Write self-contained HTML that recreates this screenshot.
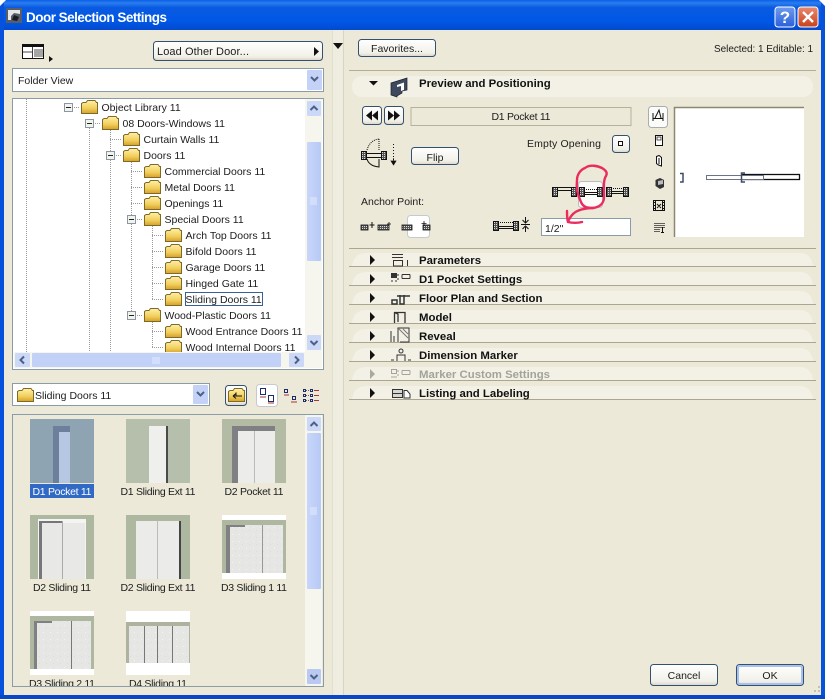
<!DOCTYPE html>
<html><head><meta charset="utf-8"><title>Door Selection Settings</title>
<style>
html,body{margin:0;padding:0;background:#ece9d8;width:825px;height:699px;overflow:hidden}
svg{display:block}
text{font-family:"Liberation Sans",sans-serif;font-size:10.5px;fill:#1c1c1c}
.b{font-weight:bold;font-size:11.4px;fill:#111}
.m{text-anchor:middle}
</style></head><body>
<svg xmlns="http://www.w3.org/2000/svg" width="825" height="699" viewBox="0 0 825 699">
<defs>
<linearGradient id="tb" x1="0" y1="0" x2="0" y2="1"><stop offset="0" stop-color="#0a5fe6"/><stop offset=".1" stop-color="#2a7ef0"/><stop offset=".25" stop-color="#0a5ae0"/><stop offset=".7" stop-color="#0058e6"/><stop offset="1" stop-color="#0349cf"/></linearGradient>
<linearGradient id="fd" x1="0" y1="0" x2="0" y2="1"><stop offset="0" stop-color="#fff0a8"/><stop offset=".6" stop-color="#f2cf5c"/><stop offset="1" stop-color="#d3a027"/></linearGradient>
<linearGradient id="bt" x1="0" y1="0" x2="0" y2="1"><stop offset="0" stop-color="#fff"/><stop offset=".8" stop-color="#f1f0e8"/><stop offset="1" stop-color="#d8d5c8"/></linearGradient>
<linearGradient id="sb" x1="0" y1="0" x2="1" y2="0"><stop offset="0" stop-color="#c8d6fa"/><stop offset="1" stop-color="#b7c9f5"/></linearGradient>
<linearGradient id="red" x1="0" y1="0" x2="0" y2="1"><stop offset="0" stop-color="#e98a70"/><stop offset="1" stop-color="#c8401c"/></linearGradient>
<linearGradient id="blu" x1="0" y1="0" x2="0" y2="1"><stop offset="0" stop-color="#6f9bf0"/><stop offset="1" stop-color="#2a5fd8"/></linearGradient>
<symbol id="f" viewBox="0 0 17 14" width="17" height="14"><path d="M.5 13.5V3.5L2 2.5H5L6.5.5H14L15.5 2.5H16.5V13.5Z" fill="url(#fd)" stroke="#7d6a28"/></symbol>
<symbol id="x" viewBox="0 0 9 9" width="9" height="9"><rect x=".5" y=".5" width="8" height="8" fill="#f3f3ee" stroke="#8a97a3"/><path d="M2 4.5H7" stroke="#222"/></symbol>
<clipPath id="ct"><rect x="14" y="99" width="291" height="253"/></clipPath>
<clipPath id="cg"><rect x="14" y="415" width="291" height="271"/></clipPath>
<pattern id="ht" width="2" height="2" patternUnits="userSpaceOnUse"><rect width="2" height="2" fill="#555"/><rect width="1" height="1" fill="#ddd"/></pattern>
<pattern id="sp" width="7" height="7" patternUnits="userSpaceOnUse"><rect width="7" height="7" fill="#e6e6e4"/><rect x="1" y="2" width="1" height="1" fill="#f3f3f3"/><rect x="4" y="5" width="1" height="1" fill="#dcdcdc"/></pattern>
</defs>

<rect width="825" height="699" fill="#ece9d8"/>
<!-- window frame -->
<rect x="0" y="0" width="825" height="30" fill="url(#tb)"/>
<rect x="0" y="0" width="4" height="699" fill="#0752dc"/>
<rect x="821" y="0" width="4" height="699" fill="#0752dc"/>
<rect x="0" y="695" width="825" height="4" fill="#0747c8"/>
<path d="M0 0H6L0 6ZM825 0H819L825 6Z" fill="#fff"/>
<!-- title -->
<rect x="6" y="8" width="16" height="15" fill="#555e6a"/><path d="M8 10H20V14L14 13L11 16V20H8Z" fill="#e6e6e6"/><path d="M14 15L19 17L17 21L12 20Z" fill="#1a1a22"/>
<text x="26" y="22" style="font-size:13.5px;font-weight:bold;fill:#fff" textLength="141">Door Selection Settings</text>
<rect x="775" y="7" width="20" height="20" rx="3" fill="url(#blu)" stroke="#fff"/>
<text x="785" y="23" class="m" style="font-size:17px;font-weight:bold;fill:#fff">?</text>
<rect x="798" y="7" width="20" height="20" rx="3" fill="url(#red)" stroke="#fff"/>
<path d="M803 12L813 22M813 12L803 22" stroke="#fff" stroke-width="2.4"/>

<!-- splitter -->
<rect x="332" y="30" width="12" height="665" fill="#efede0"/>
<path d="M332.5 30V695" stroke="#e2dfcf"/><path d="M343.5 30V695" stroke="#d8d5c4"/>
<path d="M333 43H343L338 49Z" fill="#111"/>

<!-- top-left -->
<rect x="22.5" y="44.5" width="21" height="14" fill="#fff" stroke="#111"/><rect x="22" y="44" width="22" height="3" fill="#111"/><path d="M32.5 47V58M22 52H32M34 50H43M34 52H43M34 54H43M34 56H43" stroke="#111" stroke-width=".8"/>
<path d="M49 56L53 59L49 62Z" fill="#111"/>
<rect x="153.5" y="41.5" width="169" height="19" rx="3" fill="url(#bt)" stroke="#34506f"/>
<text x="157" y="55" textLength="92" style="font-size:11px">Load Other Door...</text>
<path d="M314 47L319 51.5L314 56Z" fill="#111"/>

<rect x="12.5" y="68.5" width="311" height="23" fill="#fff" stroke="#8a9ca8"/>
<text x="18" y="84">Folder View</text>
<rect x="307" y="70" width="15" height="20" rx="1" fill="#c3d2f6"/><path d="M311 77L314.500 80.500L318 77" fill="none" stroke="#4d6185" stroke-width="2"/>

<!-- tree -->
<rect x="12.500" y="98.500" width="311" height="271" fill="#fff" stroke="#8a9ca8"/>
<g clip-path="url(#ct)">
<g stroke="#999" stroke-dasharray="1 1" fill="none">
<path d="M26.500 99V352M89.500 128V352M110.500 128V352M131.500 160V315M152.500 224V299.500M152.500 320V348"/>
<path d="M72 107.500H80M93 123.500H101M110 139.500H122M114 155.500H122M131 171.500H143M131 187.500H143M131 203.500H143M135 219.500H143M152 235.500H164M152 251.500H164M152 267.500H164M152 283.500H164M152 299.500H164M135 315.500H143M152 331.500H164M152 347.500H164"/>
</g>
<use href="#x" x="64" y="103"/><use href="#x" x="85" y="119"/><use href="#x" x="106" y="151"/><use href="#x" x="127" y="215"/><use href="#x" x="127" y="311"/>
<use href="#f" x="81" y="100"/><use href="#f" x="102" y="116"/><use href="#f" x="123" y="132"/><use href="#f" x="123" y="148"/><use href="#f" x="144" y="164"/><use href="#f" x="144" y="180"/><use href="#f" x="144" y="196"/><use href="#f" x="144" y="212"/><use href="#f" x="165" y="228"/><use href="#f" x="165" y="244"/><use href="#f" x="165" y="260"/><use href="#f" x="165" y="276"/><use href="#f" x="165" y="292"/><use href="#f" x="144" y="308"/><use href="#f" x="165" y="324"/><use href="#f" x="165" y="340"/>
<text x="101.500" y="111">Object Library 11</text>
<text x="122.500" y="127">08 Doors-Windows 11</text>
<text x="143.500" y="143">Curtain Walls 11</text>
<text x="143.500" y="159">Doors 11</text>
<text x="164.500" y="175">Commercial Doors 11</text>
<text x="164.500" y="191">Metal Doors 11</text>
<text x="164.500" y="207">Openings 11</text>
<text x="164.500" y="223">Special Doors 11</text>
<text x="185.500" y="239">Arch Top Doors 11</text>
<text x="185.500" y="255">Bifold Doors 11</text>
<text x="185.500" y="271">Garage Doors 11</text>
<text x="185.500" y="287">Hinged Gate 11</text>
<rect x="185.500" y="292.500" width="77" height="13" fill="#fff" stroke="#3a5f95"/>
<text x="185.500" y="303">Sliding Doors 11</text>
<text x="164.500" y="319">Wood-Plastic Doors 11</text>
<text x="185.500" y="335">Wood Entrance Doors 11</text>
<text x="185.500" y="351">Wood Internal Doors 11</text>
</g>
<!-- tree v-scroll -->
<rect x="305" y="99" width="17" height="253" fill="#f6f6ee"/>
<rect x="307" y="101" width="14" height="15" rx="1" fill="#cbd8f8"/><path d="M310.500 110L314 106.500L317.500 110" fill="none" stroke="#4d6185" stroke-width="2"/>
<rect x="307" y="142" width="14" height="119" rx="1" fill="url(#sb)"/><path d="M310 198H317M310 200H317M310 202H317M310 204H317" stroke="#e4ebfc"/>
<rect x="307" y="335" width="14" height="15" rx="1" fill="#cbd8f8"/><path d="M310.500 341L314 344.500L317.500 341" fill="none" stroke="#4d6185" stroke-width="2"/>
<!-- tree h-scroll -->
<rect x="14" y="352" width="308" height="16" fill="#f6f6ee"/>
<rect x="15" y="353" width="15" height="14" rx="1" fill="#cbd8f8"/><path d="M24 356.500L20.500 360L24 363.500" fill="none" stroke="#4d6185" stroke-width="2"/>
<rect x="32" y="353" width="249" height="14" rx="1" fill="#c1d1f8"/><path d="M153 357V364M155 357V364M157 357V364M159 357V364" stroke="#e4ebfc"/>
<rect x="289" y="353" width="15" height="14" rx="1" fill="#cbd8f8"/><path d="M295 356.500L298.500 360L295 363.500" fill="none" stroke="#4d6185" stroke-width="2"/>

<!-- folder combo -->
<rect x="12.500" y="383.500" width="197" height="22" fill="#fff" stroke="#8a9ca8"/>
<use href="#f" x="17" y="388"/><text x="35" y="399">Sliding Doors 11</text>
<rect x="193" y="385" width="15" height="19" rx="1" fill="#c3d2f6"/><path d="M197 392L200.500 395.500L204 392" fill="none" stroke="#4d6185" stroke-width="2"/>
<rect x="225.500" y="385.500" width="21" height="20" rx="3" fill="url(#bt)" stroke="#34506f"/>
<use href="#f" x="228" y="388"/><path d="M233 396H242M233 396L236 393.500M233 396L236 398.500M236 392.500V396" fill="none" stroke="#111"/>
<rect x="256.500" y="384.500" width="21" height="22" rx="3" fill="#fff" stroke="#c5c9d2"/>
<g fill="none" stroke="#1e2a6e"><rect x="260.500" y="388.500" width="5" height="6"/><rect x="268.500" y="395.500" width="5" height="6"/></g><path d="M260 397H266M268 403H274" stroke="#a33" />
<g fill="none" stroke="#1e2a6e"><rect x="284.500" y="389.500" width="3" height="3"/><rect x="292.500" y="396.500" width="3" height="3"/></g><path d="M284 395H289M291 402H297" stroke="#a33"/>
<g fill="none" stroke="#1e2a6e"><rect x="303.500" y="389.500" width="2" height="2"/><rect x="303.500" y="394.500" width="2" height="2"/><rect x="303.500" y="399.500" width="2" height="2"/><rect x="310.500" y="389.500" width="2" height="2"/><rect x="310.500" y="394.500" width="2" height="2"/><rect x="310.500" y="399.500" width="2" height="2"/></g><path d="M314 390.500H319M314 395.500H319M314 400.500H319" stroke="#a33"/><path d="M306 390.500H310M306 395.500H310M306 400.500H310" stroke="#667" stroke-dasharray="1 1"/>

<!-- grid -->
<rect x="12.500" y="414.500" width="311" height="272" fill="#ece9d8" stroke="#8a9ca8"/>
<g clip-path="url(#cg)">
<!-- T1 -->
<rect x="30" y="419" width="64" height="64" fill="#8fa4b2"/><rect x="53" y="426" width="17" height="57" fill="#6d809b"/><rect x="59" y="432" width="11" height="51" fill="#b5c7e2"/>
<!-- T2 -->
<rect x="126" y="419" width="64" height="64" fill="#b5bfab"/><rect x="149" y="426" width="17" height="57" fill="#efefed"/><rect x="166" y="426" width="2" height="57" fill="#4a4a48"/>
<!-- T3 -->
<rect x="222" y="419" width="64" height="64" fill="#b4bba5"/><rect x="232" y="426" width="43" height="57" fill="#808084"/><rect x="238" y="431" width="37" height="52" fill="#ececea"/><rect x="254" y="431" width="1" height="52" fill="#bbb"/>
<!-- T4 -->
<rect x="30" y="515" width="64" height="64" fill="#aeb8a0"/><rect x="38" y="519" width="48" height="60" fill="#f4f4f2"/><rect x="39" y="521" width="3" height="58" fill="#77777a"/><rect x="42" y="521" width="20" height="2" fill="#77777a"/><rect x="42" y="523" width="20" height="56" fill="#e8e8e6"/><rect x="62" y="521" width="1" height="58" fill="#aaa"/><rect x="63" y="523" width="22" height="56" fill="#e8e8e6"/>
<!-- T5 -->
<rect x="126" y="515" width="64" height="64" fill="#aeb8a0"/><rect x="136" y="521" width="43" height="58" fill="#ebebe9"/><rect x="157" y="521" width="1" height="58" fill="#bbb"/><rect x="179" y="521" width="2" height="58" fill="#444"/>
<!-- T6 -->
<rect x="222" y="515" width="64" height="64" fill="#fff"/><rect x="222" y="520" width="64" height="53" fill="#aeb8a0"/><rect x="226" y="525" width="57" height="48" fill="url(#sp)"/><rect x="226" y="525" width="4" height="48" fill="#808084"/><rect x="230" y="525" width="15" height="2" fill="#808084"/><rect x="262" y="525" width="1" height="48" fill="#999"/>
<!-- T7 -->
<rect x="30" y="611" width="64" height="64" fill="#fff"/><rect x="30" y="616" width="64" height="53" fill="#aeb8a0"/><rect x="34" y="621" width="57" height="48" fill="url(#sp)"/><rect x="34" y="621" width="3" height="48" fill="#808084"/><rect x="37" y="621" width="15" height="2" fill="#808084"/><rect x="71" y="621" width="1" height="48" fill="#777"/>
<!-- T8 -->
<rect x="126" y="611" width="64" height="64" fill="#fff"/><rect x="126" y="622" width="64" height="41" fill="#aeb3a0"/><rect x="129" y="626" width="60" height="37" fill="url(#sp)"/><path d="M144.500 626V663M157.500 626V663M172.500 626V663" stroke="#777"/>
<rect x="30" y="484" width="64" height="14" fill="#316ac5"/>
<text x="62" y="495" class="m" style="fill:#fff" textLength="59">D1 Pocket 11</text>
<text x="158" y="495" class="m" textLength="75">D1 Sliding Ext 11</text>
<text x="254" y="495" class="m" textLength="59">D2 Pocket 11</text>
<text x="62" y="591" class="m" textLength="58">D2 Sliding 11</text>
<text x="158" y="591" class="m" textLength="75">D2 Sliding Ext 11</text>
<text x="254" y="591" class="m" textLength="66">D3 Sliding 1 11</text>
<text x="62" y="687" class="m" textLength="66">D3 Sliding 2 11</text>
<text x="158" y="687" class="m" textLength="58">D4 Sliding 11</text>
</g>
<!-- grid scroll -->
<rect x="305" y="415" width="17" height="271" fill="#f6f6ee"/>
<rect x="307" y="417" width="14" height="14" rx="1" fill="#cbd8f8"/><path d="M310.500 426L314 422.500L317.500 426" fill="none" stroke="#4d6185" stroke-width="2"/>
<rect x="307" y="433" width="14" height="156" rx="1" fill="url(#sb)"/><path d="M310 508H317M310 510H317M310 512H317M310 514H317" stroke="#e4ebfc"/>
<rect x="307" y="669" width="14" height="15" rx="1" fill="#b9c9f2"/><path d="M310.500 675L314 678.500L317.500 675" fill="none" stroke="#4d6185" stroke-width="2"/>

<!-- right top -->
<rect x="358.500" y="39.500" width="77" height="17" rx="3" fill="url(#bt)" stroke="#34506f"/>
<text x="397" y="52" class="m">Favorites...</text>
<text x="714" y="52" style="font-size:10px" textLength="99">Selected: 1 Editable: 1</text>
<path d="M349 70.500H816" stroke="#b3ae98"/>
<rect x="352" y="76" width="461" height="21" rx="10" fill="#f3f1e6"/>
<path d="M369 81H378L373.500 85.500Z" fill="#111"/>
<path d="M391 83L407 78V90L402 91V93L397 96V97L391 95Z" fill="#3d4a5e" stroke="#1a2230" stroke-width=".7"/>
<path d="M397 85L404 82.500V90L401 91V86L397 87Z" fill="#fff"/>
<text x="419" y="87" class="b">Preview and Positioning</text>

<!-- nav -->
<rect x="362.500" y="106.500" width="19" height="18" rx="3" fill="url(#bt)" stroke="#34506f"/>
<path d="M372 110.500L366 115.500L372 120.500ZM378 110.500L372 115.500L378 120.500Z" fill="#111"/>
<rect x="384.500" y="106.500" width="19" height="18" rx="3" fill="url(#bt)" stroke="#34506f"/>
<path d="M388 110.500L394 115.500L388 120.500ZM394 110.500L400 115.500L394 120.500Z" fill="#111"/>
<rect x="411" y="107.500" width="220" height="18" fill="#ece9d8" stroke="#b5b19c"/>
<text x="521" y="120" class="m" textLength="59">D1 Pocket 11</text>

<!-- door swing icon -->
<g fill="none" stroke="#111"><rect x="361.500" y="151.500" width="5" height="8" fill="url(#ht)"/><rect x="381.500" y="151.500" width="5" height="8" fill="url(#ht)"/><path d="M366 153.500H381M366 157.500H381"/><path d="M367 150Q370 140 379 139" stroke-dasharray="1 1"/><path d="M379 139V151" stroke-dasharray="1 1"/><path d="M367 159Q369 166 379 167V159"/><path d="M393.500 144V160" stroke-dasharray="1 2"/></g>
<path d="M393.500 158V164M391 161L393.500 165L396 161Z" fill="#111" stroke="#111" stroke-width=".7"/>
<rect x="411.500" y="147.500" width="47" height="17" rx="3" fill="url(#bt)" stroke="#34506f"/>
<text x="435" y="161" class="m">Flip</text>
<text x="527" y="147" textLength="74">Empty Opening</text>
<rect x="612.500" y="135.500" width="17" height="17" rx="3" fill="url(#bt)" stroke="#34506f"/>
<rect x="618.500" y="141.500" width="4" height="4" fill="#fff" stroke="#111"/>

<!-- anchor -->
<text x="361" y="205">Anchor Point:</text>
<rect x="407.500" y="215.500" width="22" height="22" rx="3" fill="#fff" stroke="#c5c9d2"/>
<rect x="361" y="225" width="7" height="5" fill="url(#ht)" stroke="#111" stroke-width=".8"/>
<path d="M372 222V228M369.500 225H374.500" stroke="#111"/>
<rect x="378" y="225" width="11" height="5" fill="url(#ht)" stroke="#111" stroke-width=".8"/>
<path d="M389 222V226M387 224H391" stroke="#111" stroke-width=".8"/>
<rect x="402" y="225" width="10" height="5" fill="url(#ht)" stroke="#111" stroke-width=".8"/>
<rect x="423" y="225" width="7" height="5" fill="url(#ht)" stroke="#111" stroke-width=".8"/>
<path d="M424 221V226M421.500 223.500H426.500" stroke="#111" stroke-width=".8"/>

<!-- position icons -->
<rect x="578.500" y="181.500" width="24" height="26" rx="3" fill="#fbfbf8" stroke="#b9bcc2"/>
<g stroke="#111" fill="none">
<rect x="552.500" y="187.500" width="5" height="9" fill="url(#ht)"/><rect x="571.500" y="187.500" width="5" height="9" fill="url(#ht)"/><path d="M557 187.500H572.500M557 190.500H572"/>
<rect x="579.500" y="187.500" width="5" height="9" fill="url(#ht)"/><rect x="597.500" y="187.500" width="5" height="9" fill="url(#ht)"/><path d="M584 189.500H598" stroke-dasharray="1 1"/><path d="M584 192.500H598M584 194.500H598"/>
<rect x="606.500" y="187.500" width="5" height="9" fill="url(#ht)"/><rect x="623.500" y="187.500" width="5" height="9" fill="url(#ht)"/><path d="M611 188.500H624" stroke-dasharray="1 1"/><path d="M611 193.500H624M611 191.500H624"/>
<rect x="493.500" y="221.500" width="5" height="9" fill="url(#ht)"/><rect x="513.500" y="221.500" width="5" height="9" fill="url(#ht)"/><path d="M498 222.500H513" stroke-dasharray="1 1"/><path d="M498 226.500H513M498 228.500H513"/>
<path d="M525.500 217V223M525.500 227V232M522.500 220L525.500 223L528.500 220M522.500 229L525.500 226L528.500 229M521 224.500H530"/>
</g>
<rect x="541.500" y="218.500" width="89" height="17" fill="#fff" stroke="#8a9ca8"/>
<text x="545" y="232">1/2"</text>

<!-- preview -->
<rect x="648.500" y="106.500" width="19" height="21" rx="3" fill="#fbfbf8" stroke="#a8acb4"/>
<g fill="none" stroke="#111"><path d="M653 113V121M663 113V121M653 118.500H663M655 118L659 110L661 118"/></g>
<rect x="655.500" y="135.500" width="7" height="10" fill="#fff" stroke="#111"/><rect x="657" y="137" width="4" height="3" fill="none" stroke="#111" stroke-width=".7"/>
<path d="M656.500 156.500L659 155.500L661.500 157.500V166L658.500 165L656.500 163.500Z" fill="#fff" stroke="#111"/><path d="M659 158V164" stroke="#111"/>
<path d="M655.500 180L660 178L664 180V187L660 189L655.500 186Z" fill="#333"/><path d="M658 181L663 180V184L658 185Z" fill="#bbb"/>
<g stroke="#111" fill="none"><rect x="653.500" y="200.500" width="11" height="10"/><path d="M655.500 200V211M662.500 200V211M653 202.500H656M653 205.500H656M653 208.500H656M662 202.500H665M662 205.500H665M662 208.500H665M657 204L661 208M661 204L657 208"/></g>
<path d="M654 223.500H665M654 225.500H665M654 227.500H665M654 229.500H660M654 231.500H660" stroke="#333" stroke-width=".8"/><path d="M662.500 227V232M661 232.500H664" stroke="#111"/>
<rect x="674" y="107" width="130" height="130" fill="#fff"/>
<path d="M674.500 237V107.500H804" fill="none" stroke="#8b8770" stroke-width="1.500"/>
<path d="M680 173.500H683V182H680" fill="none" stroke="#3e4c68" stroke-width="1.500"/>
<rect x="742.500" y="174.500" width="57" height="5" fill="none" stroke="#111" stroke-width="1.300"/>
<rect x="706.500" y="175.500" width="57" height="4" fill="#fff" stroke="#6b7388"/>
<path d="M745 173H741.500V182H745" fill="none" stroke="#3e4c68" stroke-width="1.500"/>

<!-- panel rows -->
<g fill="#f3f1e6">
<path d="M352 266Q354 253 366 253H800Q811 253 813 266Z"/>
<path d="M352 285Q354 272 366 272H800Q811 272 813 285Z"/>
<path d="M352 304Q354 291 366 291H800Q811 291 813 304Z"/>
<path d="M352 323Q354 310 366 310H800Q811 310 813 323Z"/>
<path d="M352 342Q354 329 366 329H800Q811 329 813 342Z"/>
<path d="M352 361Q354 348 366 348H800Q811 348 813 361Z"/>
<path d="M352 380Q354 367 366 367H800Q811 367 813 380Z"/>
<path d="M352 399Q354 386 366 386H800Q811 386 813 399Z"/>
</g>
<path d="M349 248.500H816M349 266.500H816M349 285.500H816M349 304.500H816M349 323.500H816M349 342.500H816M349 361.500H816M349 380.500H816M349 399.500H816" stroke="#aaa68f"/>
<g fill="#111">
<path d="M370 255L375 260L370 265Z"/><path d="M370 274L375 279L370 284Z"/><path d="M370 293L375 298L370 303Z"/><path d="M370 312L375 317L370 322Z"/><path d="M370 331L375 336L370 341Z"/><path d="M370 350L375 355L370 360Z"/><path d="M370 369L375 374L370 379Z" fill="#a9a9a0"/><path d="M370 388L375 393L370 398Z"/>
</g>
<text x="419" y="264" class="b">Parameters</text>
<text x="419" y="283" class="b">D1 Pocket Settings</text>
<text x="419" y="302" class="b">Floor Plan and Section</text>
<text x="419" y="321" class="b">Model</text>
<text x="419" y="340" class="b">Reveal</text>
<text x="419" y="359" class="b">Dimension Marker</text>
<text x="419" y="378" class="b" style="fill:#a3a39a">Marker Custom Settings</text>
<text x="419" y="397" class="b">Listing and Labeling</text>
<!-- row icons -->
<g fill="none" stroke="#333">
<path d="M392 254.500H403M392 257.500H403M393.500 260.500H402.500V266H393.500ZM407.500 260V266"/>
<rect x="391.500" y="273.500" width="5" height="4" fill="#333"/><path d="M398 274V276M398 278V280M391 281H393M395 281H397M402 274.500H410M402 278.500H410M402 274.500V278.500M410 274.500V278.500"/>
<path d="M392 300H397V304H392ZM397 296H410M400 295V304H404V295" stroke-width="1.500"/>
<path d="M394.500 323V312.500H405V323M394.500 312.500L398 314V322M405 314V323" stroke-width="1.300"/>
<path d="M391 331V342M394 336V342M398 342V328H409V342H400" /><path d="M399 329L408 338M403 329L408 334" stroke="#777"/>
<circle cx="401" cy="351" r="2"/><path d="M397 361V355H405V361M391 360H394M408 360H411"/>
</g>
<g fill="none" stroke="#a4a49c"><rect x="391.500" y="369.500" width="5" height="4"/><path d="M398 370V372M398 374V376M391 377H397M402 370.500H410M402 374.500H410M402 370.500V374.500M410 370.500V374.500"/></g>
<g fill="none" stroke="#333"><rect x="392.500" y="389.500" width="10" height="8" fill="#d7d7d2"/><path d="M392 393.500H403"/><path d="M404 390.500H407L410 394V398H404Z" fill="#fff"/></g>

<!-- buttons -->
<rect x="650.500" y="664.500" width="67" height="21" rx="3" fill="url(#bt)" stroke="#34506f"/>
<text x="684" y="679" class="m">Cancel</text>
<rect x="736.500" y="664.500" width="67" height="21" rx="3" fill="url(#bt)" stroke="#34506f"/>
<rect x="738" y="666" width="64" height="18" rx="2" fill="none" stroke="#a8c0ee" stroke-width="2"/>
<text x="770" y="679" class="m">OK</text>
<!-- grip -->
<g fill="#c4c1b0"><rect x="818" y="690" width="2" height="2"/><rect x="814" y="690" width="2" height="2"/><rect x="818" y="686" width="2" height="2"/></g>

<!-- red annotation -->
<g fill="none" stroke="#ea2c5e" stroke-width="2.400" stroke-linecap="round" stroke-linejoin="round">
<path d="M585 168C590 164 598 166 602 168C605 170 608 172 606 176C603 180 604 190 604 197C604 203 600 207 593 208C587 208 583 207 581 202C578 196 576 188 577 180C577 175 580 170 585 168Z"/>
<path d="M593 208C585 208 577 210 573 214C571 216 569 219 568 222M567 211C567 215 567 219 568 222C572 223 578 223 582 222"/>
</g>
</svg>
</body></html>
